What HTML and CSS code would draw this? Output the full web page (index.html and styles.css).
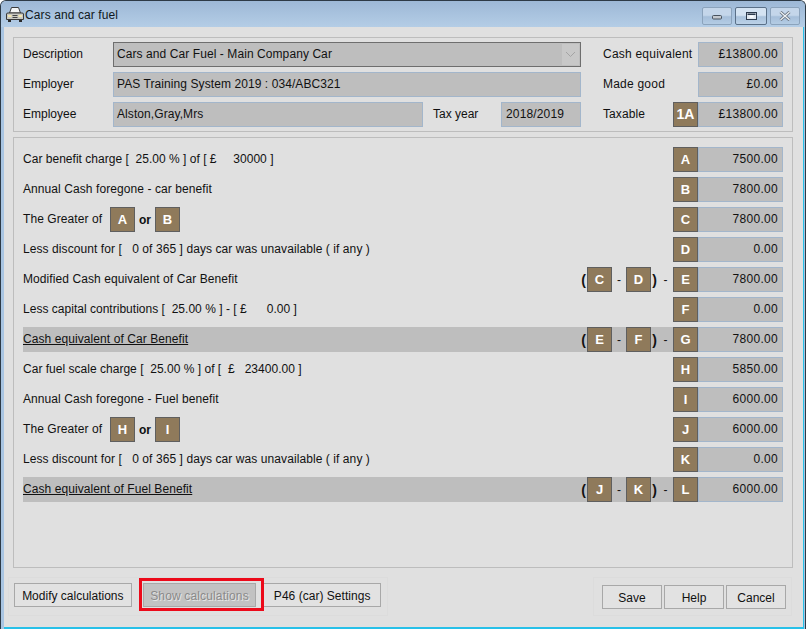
FILE: index.html
```html
<!DOCTYPE html>
<html lang="en">
<head>
<meta charset="utf-8">
<title>Cars and car fuel</title>
<link rel="stylesheet" href="styles.css">
</head>
<body>
<div class="window">
  <header class="titlebar">
    <svg class="app-icon" width="20" height="18" viewBox="0 0 20 18">
      <path d="M4.5 8 L6.5 2.5 H13.5 L15.5 8 Z" fill="#f4f6f6" stroke="#3a3a3a" stroke-width="1"/>
      <path d="M1.5 9 Q1.5 8 3 8 H17 Q18.5 8 18.5 9 V14.5 H1.5 Z" fill="#c9c9c2" stroke="#3a3a3a" stroke-width="1"/>
      <path d="M3 10 H6.5 V12 H3 Z M13.5 10 H17 V12 H13.5 Z" fill="#f2e6b0"/>
      <path d="M7.5 10.5 H12.5 M7.5 12.5 H12.5" stroke="#444" stroke-width="1"/>
      <path d="M3 15 H6 V17 H3 Z M14 15 H17 V17 H14 Z" fill="#2a2a2a"/>
    </svg>
    <span class="title-text">Cars and car fuel</span>
    <div class="win-buttons">
      <div class="win-btn"><svg width="12" height="10" viewBox="0 0 12 10"><rect x="1.5" y="4.5" width="9" height="3.5" rx="1" fill="#c4c9cf" stroke="#47525e"/></svg></div>
      <div class="win-btn win-btn-max"><svg width="13" height="10" viewBox="0 0 13 10"><rect x="1.5" y="1.5" width="10" height="7" fill="#dfe7ef" stroke="#2c3a4c"/><rect x="2.5" y="2.5" width="8" height="1.5" fill="#2c3a4c"/><rect x="4.5" y="4.5" width="4" height="2" fill="#fff"/></svg></div>
      <div class="win-btn win-btn-close"><svg width="14" height="10" viewBox="0 0 14 10"><path d="M2.5 1 L11.5 9 M11.5 1 L2.5 9" stroke="#66717d" stroke-width="3"/><path d="M2.5 1 L11.5 9 M11.5 1 L2.5 9" stroke="#eef1f4" stroke-width="1.3"/></svg></div>
    </div>
  </header>

  <main class="client">
    <section class="panel head-panel">
      <div class="head-row">
        <span class="head-label">Description</span>
        <div class="field combo"><span>Cars and Car Fuel - Main Company Car</span><span class="combo-arrow"><svg width="11" height="7" viewBox="0 0 11 7"><path d="M1 1 L5.5 5.5 L10 1" fill="none" stroke="#a4a4a4"/></svg></span></div>
        <span class="side-label">Cash equivalent</span>
        <div class="field value">£13800.00</div>
      </div>
      <div class="head-row">
        <span class="head-label">Employer</span>
        <div class="field wide">PAS Training System 2019 : 034/ABC321</div>
        <span class="side-label">Made good</span>
        <div class="field value">£0.00</div>
      </div>
      <div class="head-row">
        <span class="head-label">Employee</span>
        <div class="field employee">Alston,Gray,Mrs</div>
        <span class="tax-label">Tax year</span>
        <div class="field tax">2018/2019</div>
        <span class="side-label taxable">Taxable</span>
        <div class="tag tag-1a">1A</div>
        <div class="field value">£13800.00</div>
      </div>
    </section>

    <section class="panel calc-panel">
      <div class="calc-row">
        <span class="desc tight">Car benefit charge [&nbsp; 25.00 % ] of [ £ &nbsp; &nbsp; 30000 ]</span>
        <div class="tag">A</div><div class="field value">7500.00</div>
      </div>
      <div class="calc-row">
        <span class="desc">Annual Cash foregone - car benefit</span>
        <div class="tag">B</div><div class="field value">7800.00</div>
      </div>
      <div class="calc-row">
        <span class="desc greater">The Greater of</span>
        <div class="tag">A</div><b class="or">or</b><div class="tag">B</div>
        <span class="spring"></span>
        <div class="tag">C</div><div class="field value">7800.00</div>
      </div>
      <div class="calc-row">
        <span class="desc">Less discount for [ &nbsp; 0 of 365 ] days car was unavailable ( if any )</span>
        <div class="tag">D</div><div class="field value">0.00</div>
      </div>
      <div class="calc-row">
        <span class="desc">Modified Cash equivalent of Car Benefit</span>
        <div class="formula"><b class="paren">(</b><div class="tag">C</div><span class="minus">-</span><div class="tag">D</div><b class="paren">)</b><span class="minus">-</span></div>
        <div class="tag">E</div><div class="field value">7800.00</div>
      </div>
      <div class="calc-row">
        <span class="desc tight">Less capital contributions [&nbsp; 25.00 % ] - [ £ &nbsp; &nbsp; &nbsp;0.00 ]</span>
        <div class="tag">F</div><div class="field value">0.00</div>
      </div>
      <div class="calc-row">
        <div class="band">
          <span class="desc"><u>Cash equivalent of Car Benefit</u></span>
          <div class="formula"><b class="paren">(</b><div class="tag">E</div><span class="minus">-</span><div class="tag">F</div><b class="paren">)</b><span class="minus">-</span></div>
        </div>
        <div class="tag">G</div><div class="field value">7800.00</div>
      </div>
      <div class="calc-row">
        <span class="desc tight">Car fuel scale charge [&nbsp; 25.00 % ] of [ &nbsp;£ &nbsp; 23400.00 ]</span>
        <div class="tag">H</div><div class="field value">5850.00</div>
      </div>
      <div class="calc-row">
        <span class="desc">Annual Cash foregone - Fuel benefit</span>
        <div class="tag">I</div><div class="field value">6000.00</div>
      </div>
      <div class="calc-row">
        <span class="desc greater">The Greater of</span>
        <div class="tag">H</div><b class="or">or</b><div class="tag">I</div>
        <span class="spring"></span>
        <div class="tag">J</div><div class="field value">6000.00</div>
      </div>
      <div class="calc-row">
        <span class="desc">Less discount for [ &nbsp; 0 of 365 ] days car was unavailable ( if any )</span>
        <div class="tag">K</div><div class="field value">0.00</div>
      </div>
      <div class="calc-row">
        <div class="band">
          <span class="desc"><u>Cash equivalent of Fuel Benefit</u></span>
          <div class="formula"><b class="paren">(</b><div class="tag">J</div><span class="minus">-</span><div class="tag">K</div><b class="paren">)</b><span class="minus">-</span></div>
        </div>
        <div class="tag">L</div><div class="field value">6000.00</div>
      </div>
    </section>

    <footer class="footer">
      <div class="group group-left">
        <div class="btn btn-modify">Modify calculations</div>
        <div class="btn btn-show">Show calculations<span class="callout"></span></div>
        <div class="btn btn-p46">P46 (car) Settings</div>
      </div>
      <div class="group group-right">
        <div class="btn btn-action">Save</div>
        <div class="btn btn-action">Help</div>
        <div class="btn btn-action">Cancel</div>
      </div>
    </footer>
  </main>
</div>
</body>
</html>
```
FILE: styles.css
```css
* { box-sizing: border-box; }
html, body { margin: 0; padding: 0; }
body {
  width: 807px;
  height: 629px;
  overflow: hidden;
  background: #fff;
  font-family: "Liberation Sans", Arial, sans-serif;
  font-size: 12px;
  color: #111;
}
.window {
  width: 806px;
  height: 629px;
  display: flex;
  flex-direction: column;
  background: #a9c5e2;
  border: 1px solid #2d3a46;
  border-bottom: 0;
  border-radius: 6px 6px 0 0;
  overflow: hidden;
}
.titlebar {
  height: 26px;
  flex: none;
  display: flex;
  align-items: center;
  padding-left: 4px;
  background: linear-gradient(#9db8d6, #b4cde6);
}
.app-icon { flex: none; }
.title-text { margin-left: 0; padding-top: 2px; color: #101820; letter-spacing: 0.1px; }
.win-buttons {
  margin-left: auto;
  margin-right: 5px;
  align-self: flex-start;
  margin-top: 6px;
  display: flex;
  gap: 3px;
}
.win-btn {
  width: 30px;
  height: 18px;
  display: flex;
  align-items: center;
  justify-content: center;
  border: 1px solid #8ba3bc;
  border-radius: 2px;
  background: linear-gradient(#c4d6ea 45%, #a6bfda 55%, #b4cce4);
}
.win-btn-max {
  width: 32px;
  border-color: #5a7088;
  background: linear-gradient(#d4e3f2 45%, #a9c2dc 55%, #bcd2e8);
}
.client {
  flex: 1;
  margin: 0 1px 0 3px;
  padding: 10px 9px 0 9px;
  background: #e0e0e0;
  display: flex;
  flex-direction: column;
  border-bottom: 2px solid #27c0e8;
  border-right: 1px solid #27c0e8;
  min-height: 0;
}
.panel {
  border: 1px solid #bdbdbd;
  width: 780px;
  flex: none;
}
.head-panel {
  height: 95px;
  padding: 4px 9px 0 9px;
  display: flex;
  flex-direction: column;
  gap: 5px;
}
.head-row { display: flex; align-items: center; height: 25px; }
.head-label { width: 90px; flex: none; padding-bottom: 2px; }
.field {
  height: 25px;
  flex: none;
  display: flex;
  align-items: center;
  padding: 0 3px 2px 3px;
  background: #bebebe;
  border: 1px solid #a3b6cb;
  white-space: nowrap;
  letter-spacing: 0.08px;
}
.combo {
  width: 468px;
  border: 1px solid #6e6e6e;
  justify-content: space-between;
  padding: 0 1px 0 3px;
}
.combo > span:first-child { padding-bottom: 1px; }
.combo-arrow {
  width: 17px;
  height: 21px;
  display: flex;
  align-items: center;
  justify-content: center;
  background: #c8c8c8;
}
.wide { width: 468px; }
.employee { width: 310px; }
.tax-label { width: 68px; flex: none; margin-left: 10px; padding-bottom: 2px; }
.tax { width: 80px; padding-left: 4px; letter-spacing: 0.15px; }
.side-label { margin-left: 22px; flex: 1; letter-spacing: 0.22px; padding-bottom: 2px; }
.side-label.taxable { flex: 0 0 70px; letter-spacing: 0.1px; }
.value { width: 85px; justify-content: flex-end; padding-right: 4px; letter-spacing: 0.3px; }
.tag {
  width: 25px;
  height: 25px;
  flex: none;
  display: flex;
  align-items: center;
  justify-content: center;
  background: #8f7a5b;
  border: 1px solid #5f5f5f;
  color: #fff;
  font-weight: bold;
  font-size: 13px;
}
.tag-1a { font-size: 14px; padding-bottom: 2px; }
.calc-panel {
  height: 431px;
  margin-top: 5px;
  padding: 9px 9px 0 9px;
  display: flex;
  flex-direction: column;
  gap: 5px;
}
.calc-row { display: flex; align-items: center; height: 25px; }
.desc { flex: 1; white-space: nowrap; letter-spacing: 0.08px; padding-bottom: 2px; }
.desc.tight { letter-spacing: 0.02px; }
.desc.greater { flex: 0 0 87px; }
.spring { flex: 1; }
.or { width: 20px; text-align: center; }
.band {
  flex: 1;
  height: 25px;
  display: flex;
  align-items: center;
  background: #bebebe;
}
.formula { display: flex; align-items: center; flex: none; }
.paren { width: 7px; font-size: 14px; text-align: center; }
.minus { width: 14px; text-align: center; }
.paren + .minus { width: 15px; }
.footer {
  flex: none;
  display: flex;
  justify-content: space-between;
  margin-top: 9px;
  margin-left: -5px;
  width: 784px;
}
.group {
  height: 39px;
  border: 1px solid #dcdcdc;
  display: flex;
}
.group-left { width: 380px; padding: 5px 6px 0 5px; }
.group-right { width: 199px; padding: 7px 5px 0 8px; gap: 2px; }
.btn {
  height: 24px;
  display: flex;
  align-items: center;
  justify-content: center;
  border: 1px solid #a8a8a8;
  background: #e2e2e2;
  white-space: nowrap;
  padding-top: 1px;
}
.btn-modify { width: 118px; }
.btn-show {
  width: 114px;
  margin-left: 11px;
  position: relative;
  background: #c2c2c2;
  color: #8a8a8a;
  letter-spacing: 0.15px;
  text-shadow: 1px 1px 0 #e6e6e6;
}
.btn-p46 { width: 118px; margin-left: 7px; letter-spacing: 0.03px; }
.btn-action { width: 60px; }
.callout {
  position: absolute;
  left: -5px;
  top: -6px;
  width: 125px;
  height: 33px;
  border: 3px solid #ec0a1a;
  pointer-events: none;
}
```
